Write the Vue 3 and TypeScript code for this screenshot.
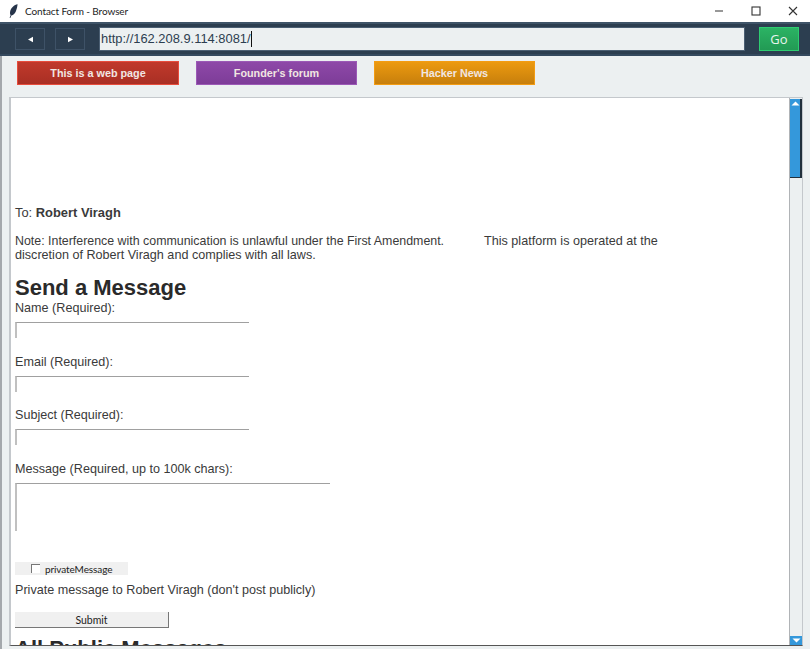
<script setup lang="ts">
interface LinkButton { label: string; kind: string }
const links: LinkButton[] = [
  { label: 'This is a web page', kind: 'red' },
  { label: "Founder's forum", kind: 'purple' },
  { label: 'Hacker News', kind: 'orange' },
]
const fields: string[] = ['Name (Required):', 'Email (Required):', 'Subject (Required):']
</script>

<template>
  <div class="window">
    <header class="titlebar">
      <svg class="feather" width="9" height="14" viewBox="0 0 12 16" preserveAspectRatio="none">
        <path d="M11.5 0.3C7 1 2.6 4.4 1.6 8.2 1.1 10.2 1.3 11.8 2.2 12.6L0.8 15.6 1.8 15.9 3.2 13C6 13 8 11 9.2 8.4 10.4 5.8 11.2 3 11.5 0.3Z" fill="#26344a" />
      </svg>
      <span class="title">Contact Form - Browser</span>
      <div class="winctl">
        <svg width="12" height="12" viewBox="0 0 12 12"><path d="M2 6H10" stroke="#444" stroke-width="1.1" /></svg>
        <svg width="12" height="12" viewBox="0 0 12 12"><rect x="2" y="2" width="8" height="8" fill="none" stroke="#333" stroke-width="1.1" /></svg>
        <svg width="12" height="12" viewBox="0 0 12 12"><path d="M2 2L10 10M10 2L2 10" stroke="#333" stroke-width="1.1" /></svg>
      </div>
    </header>

    <nav class="navbar">
      <button class="navbtn"><svg width="7" height="7" viewBox="0 0 7 7"><path d="M1 3.5L6 0.8V6.2Z" fill="#fff" /></svg></button>
      <button class="navbtn"><svg width="7" height="7" viewBox="0 0 7 7"><path d="M6 3.5L1 0.8V6.2Z" fill="#fff" /></svg></button>
      <div class="address"><span class="url">http://162.208.9.114:8081/</span></div>
      <button class="go">Go</button>
    </nav>

    <div class="linkbar">
      <button v-for="link in links" :key="link.label" class="linkbtn" :class="link.kind">{{ link.label }}</button>
    </div>

    <div class="frame">
      <main class="page">
        <p class="to">To: <strong>Robert Viragh</strong></p>
        <p class="note"><span class="first">Note: Interference with communication is unlawful under the First Amendment.</span><span class="tabgap"></span>This platform is operated at the discretion of Robert Viragh and complies with all laws.</p>
        <h2 class="send">Send a Message</h2>
        <div v-for="field in fields" :key="field" class="field">
          <label>{{ field }}</label>
          <input type="text" class="textinput" />
        </div>
        <div class="field">
          <label>Message (Required, up to 100k chars):</label>
          <textarea class="textarea"></textarea>
        </div>
        <div class="checkstrip">
          <input type="checkbox" class="check" />
          <span>privateMessage</span>
        </div>
        <p class="private">Private message to Robert Viragh (don't post publicly)</p>
        <button class="submit">Submit</button>
        <h2 class="all">All Public Messages</h2>
      </main>
      <div class="scrollbar">
        <div class="arrow up"><svg width="9" height="5" viewBox="0 0 9 5"><path d="M4.5 0.5L8.5 4.5H0.5Z" fill="#fff" /></svg></div>
        <div class="thumb"></div>
        <div class="track"></div>
        <div class="arrow"><svg width="9" height="5" viewBox="0 0 9 5"><path d="M4.5 4.5L8.5 0.5H0.5Z" fill="#fff" /></svg></div>
      </div>
    </div>
  </div>
</template>

<style>
html, body { margin: 0; background: #ecf0f1; overflow: hidden; }
</style>

<style scoped>
.window {
  width: 810px;
  height: 649px;
  display: flex;
  flex-direction: column;
  background: linear-gradient(90deg, #a4a8ac 2px, #ecf0f1 2px);
  font-family: "Liberation Sans", Arial, sans-serif;
  overflow: hidden;
}
.titlebar {
  height: 22px;
  flex: none;
  background: #fff;
  display: flex;
  align-items: center;
  padding-left: 9px;
  box-sizing: border-box;
}
.feather { margin-right: 7px; }
.title {
  font: 10px Lato, sans-serif;
  letter-spacing: -0.1px;
  color: #222;
  white-space: nowrap;
}
.winctl {
  margin-left: auto;
  display: flex;
  gap: 25px;
  padding-right: 11px;
}
.navbar {
  height: 34px;
  flex: none;
  box-sizing: border-box;
  background: #2c3e50;
  border-top: 2px solid #3f5468;
  border-bottom: 2px solid #34495e;
  display: flex;
  align-items: center;
  padding-left: 15px;
}
.navbtn {
  width: 30px;
  height: 22px;
  padding: 0;
  margin-right: 10px;
  background: #2c3e50;
  border: 1px solid #3e5267;
  display: flex;
  align-items: center;
  justify-content: center;
}
.address {
  width: 646px;
  height: 24px;
  margin-left: 4px;
  box-sizing: border-box;
  background: #ecf0f1;
  border: 1px solid #4b5f73;
  outline: 1px solid #2c3e50;
  display: flex;
  align-items: center;
  padding-left: 1px;
  color: #2c3e50;
  font-size: 12.9px;
}
.url { border-right: 1px solid #111; line-height: 16px; }
.go {
  width: 40px;
  height: 24px;
  margin-left: 14px;
  padding: 0;
  background: linear-gradient(#2bb364, #229a54);
  border: 1px solid #2ecc71;
  color: #e8f5ee;
  font: 13px "Open Sans", sans-serif;
}
.linkbar {
  height: 41px;
  flex: none;
  box-sizing: border-box;
  padding: 5px 0 0 17px;
  display: flex;
  gap: 17px;
  align-items: flex-start;
}
.linkbtn {
  width: 162px;
  height: 24px;
  padding: 0;
  border: 1px solid;
  color: #f1e6e2;
  font: bold 10.8px "Liberation Sans", Arial, sans-serif;
}
.linkbtn + .linkbtn { width: 161px; }
.red { background: linear-gradient(#c0392b, #a92f24); border-color: #e74c3c; }
.purple { background: linear-gradient(#8e49a8, #7d3c98); border-color: #9b59b6; }
.orange { background: linear-gradient(#ec9a10, #c77f0c); border-color: #f39c12; }
.frame {
  width: 794px;
  height: 549px;
  margin-left: 9px;
  flex: none;
  box-sizing: border-box;
  background: #fff;
  border: 1px solid #c4c8cc;
  border-left-width: 2px;
  border-bottom-color: #555;
  display: flex;
  overflow: hidden;
}
.page {
  flex: 1;
  min-width: 0;
  padding: 108px 115px 0 4px;
  box-sizing: border-box;
  color: #3a3a3a;
  font-size: 12.6px;
  line-height: 14px;
  overflow: hidden;
}
.page p { margin: 0; }
.to { height: 14px; font-size: 12.9px; }
.note { margin-top: 14px !important; }
.first { font-size: 12.4px; }
.tabgap { display: inline-block; width: 40px; }
.send {
  margin: 12px 0 0;
  font-size: 22px;
  line-height: 27px;
  color: #2a2a2a;
}
.field { display: flex; flex-direction: column; align-items: flex-start; height: 53.5px; }
.field label { height: 21px; line-height: 14px; flex: none; }
.textinput {
  width: 234px;
  height: 16px;
  flex: none;
  margin: 0;
  padding: 0;
  box-sizing: border-box;
  background: #fff;
  border: 0;
  border-top: 1px solid #a0a0a0;
  border-left: 2px solid #c0c0c0;
}
.textarea {
  width: 315px;
  height: 48px;
  flex: none;
  margin: 0;
  padding: 0;
  box-sizing: border-box;
  resize: none;
  background: #fff;
  border: 0;
  border-top: 1px solid #a0a0a0;
  border-left: 2px solid #c0c0c0;
}
.checkstrip {
  width: 113px;
  height: 13px;
  margin-top: 47px;
  padding-left: 16px;
  box-sizing: border-box;
  background: #f0f0f0;
  display: flex;
  align-items: center;
  gap: 5px;
  font: 10px Lato, sans-serif;
  letter-spacing: -0.1px;
  color: #222;
}
.check {
  appearance: none;
  width: 9px;
  height: 9px;
  margin: 0;
  background: #fff;
  border: 0;
  border-top: 1px solid #777;
  border-left: 1px solid #777;
  box-sizing: border-box;
}
.private { margin-top: 8px !important; }
.submit {
  display: block;
  width: 154px;
  height: 16px;
  margin-top: 15px;
  padding: 0;
  background: #f0f0f0;
  border: 0;
  border-right: 1px solid #777;
  border-bottom: 1px solid #777;
  font: 10.5px Lato, sans-serif;
  color: #222;
}
.all {
  margin: 7px 0 0;
  font-size: 22px;
  line-height: 28px;
  color: #2a2a2a;
  white-space: nowrap;
}
.scrollbar {
  width: 12px;
  flex: none;
  display: flex;
  flex-direction: column;
  padding-top: 1px;
  border-left: 1px solid #b0b3b6;
  background: #ecf0f1;
}
.arrow {
  height: 9px;
  flex: none;
  background: #3498db;
  display: flex;
  align-items: center;
  justify-content: center;
}
.arrow.up { border-right: 2px solid #22303c; }
.thumb {
  height: 69px;
  flex: none;
  background: #3498db;
  border-right: 2px solid #22303c;
  border-bottom: 1px solid #22303c;
}
.track { flex: 1; }
</style>
